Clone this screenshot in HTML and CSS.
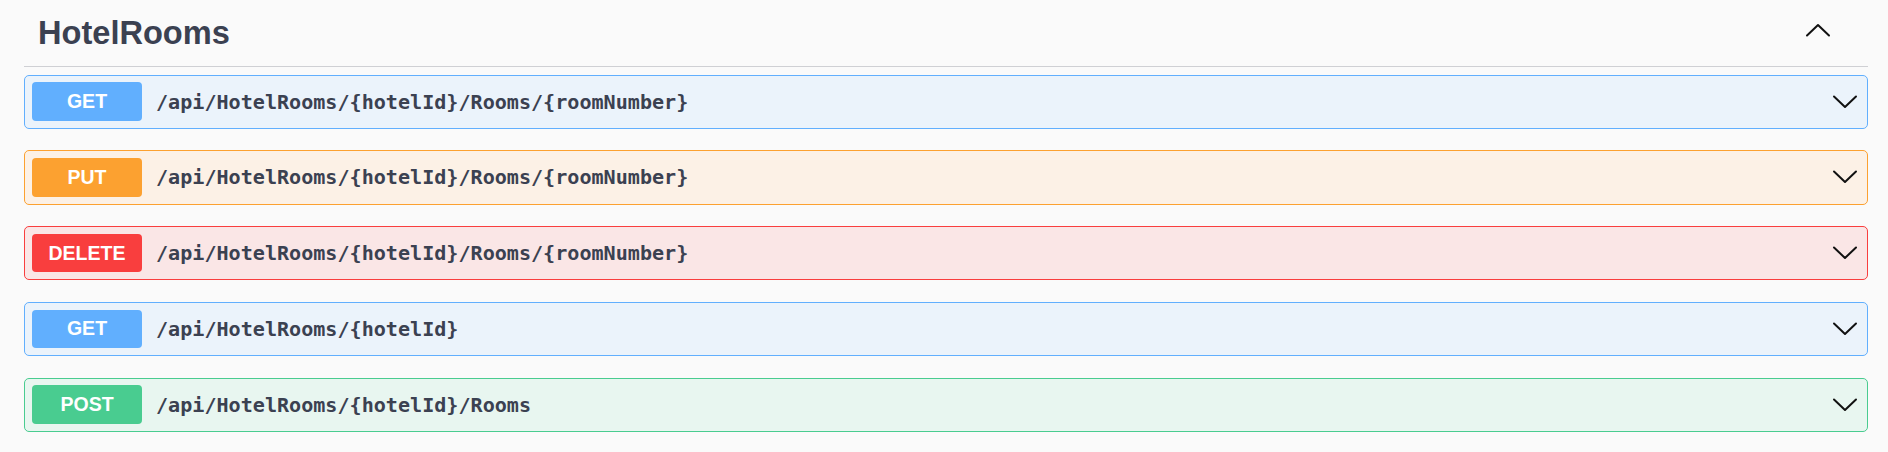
FILE: index.html
```html
<!DOCTYPE html>
<html>
<head>
<meta charset="utf-8">
<link rel="stylesheet" href="styles.css">
</head>
<body>
<div class="wrapper">
  <div class="tag-header">
    <h3 class="tag-title">HotelRooms</h3>
    <svg class="arrow-up" width="26" height="14" viewBox="0 0 26 14"><polyline points="2,12.5 13,2 24,12.5" fill="none" stroke="#111" stroke-width="2" stroke-linecap="round" stroke-linejoin="round"/></svg>
  </div>
  <div class="ops">
    <div class="op op-get">
      <span class="method"><span class="method-text">GET</span></span>
      <span class="path">/api/HotelRooms/{hotelId}/Rooms/{roomNumber}</span>
      <svg class="arrow" width="26" height="14" viewBox="0 0 26 14"><polyline points="2,1.5 13,12 24,1.5" fill="none" stroke="#111" stroke-width="2" stroke-linecap="round" stroke-linejoin="round"/></svg>
    </div>
    <div class="op op-put">
      <span class="method"><span class="method-text">PUT</span></span>
      <span class="path">/api/HotelRooms/{hotelId}/Rooms/{roomNumber}</span>
      <svg class="arrow" width="26" height="14" viewBox="0 0 26 14"><polyline points="2,1.5 13,12 24,1.5" fill="none" stroke="#111" stroke-width="2" stroke-linecap="round" stroke-linejoin="round"/></svg>
    </div>
    <div class="op op-delete">
      <span class="method"><span class="method-text">DELETE</span></span>
      <span class="path">/api/HotelRooms/{hotelId}/Rooms/{roomNumber}</span>
      <svg class="arrow" width="26" height="14" viewBox="0 0 26 14"><polyline points="2,1.5 13,12 24,1.5" fill="none" stroke="#111" stroke-width="2" stroke-linecap="round" stroke-linejoin="round"/></svg>
    </div>
    <div class="op op-get">
      <span class="method"><span class="method-text">GET</span></span>
      <span class="path">/api/HotelRooms/{hotelId}</span>
      <svg class="arrow" width="26" height="14" viewBox="0 0 26 14"><polyline points="2,1.5 13,12 24,1.5" fill="none" stroke="#111" stroke-width="2" stroke-linecap="round" stroke-linejoin="round"/></svg>
    </div>
    <div class="op op-post">
      <span class="method"><span class="method-text">POST</span></span>
      <span class="path">/api/HotelRooms/{hotelId}/Rooms</span>
      <svg class="arrow" width="26" height="14" viewBox="0 0 26 14"><polyline points="2,1.5 13,12 24,1.5" fill="none" stroke="#111" stroke-width="2" stroke-linecap="round" stroke-linejoin="round"/></svg>
    </div>
  </div>
</div>
</body>
</html>
```

FILE: styles.css
```css
html, body {
  margin: 0;
  padding: 0;
  background: #fafafa;
}

.wrapper {
  padding: 0 20px 0 24px;
  font-family: "Liberation Sans", Arial, sans-serif;
  color: #3b4151;
}

.tag-header {
  display: flex;
  align-items: flex-start;
  justify-content: space-between;
  padding: 13px 0 13px 14px;
  border-bottom: 1px solid #cfd0d4;
}

.tag-title {
  margin: 0;
  font-size: 32.6px;
  line-height: 40px;
  font-weight: 700;
  color: #3b4151;
}

.arrow-up {
  display: block;
  margin: 10px 37px 0 0;
}

.ops {
  padding-top: 7.5px;
}

.op {
  display: flex;
  align-items: center;
  height: 54.25px;
  box-sizing: border-box;
  padding: 7px 9px 7px 7px;
  border: 1px solid;
  border-radius: 5px;
  margin-bottom: 21.5px;
}

.method {
  display: flex;
  align-items: center;
  justify-content: center;
  width: 110px;
  height: 38.5px;
  flex: none;
  border-radius: 4px;
  color: #fff;
  font-size: 19.5px;
  font-weight: 700;
}

.path {
  flex: 1;
  padding-left: 14px;
  font-family: "DejaVu Sans Mono", "Liberation Mono", monospace;
  font-size: 20.1px;
  font-weight: 700;
  color: #3b4151;
}

.arrow {
  display: block;
  flex: none;
}

.op-get {
  background: #ebf3fb;
  border-color: #61affe;
}
.op-get .method { background: #61affe; }

.op-put {
  background: #fcf1e6;
  border-color: #fca130;
}
.op-put .method { background: #fca130; }

.op-delete {
  background: #fae6e6;
  border-color: #f93e3e;
}
.op-delete .method { background: #f93e3e; }

.op-post {
  background: #e8f6f0;
  border-color: #49cc90;
}
.op-post .method { background: #49cc90; }
```
